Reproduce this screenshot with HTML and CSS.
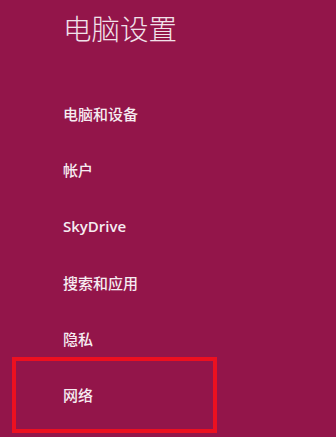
FILE: index.html
```html
<!DOCTYPE html>
<html lang="zh-CN">
<head>
    <meta charset="utf-8">
    <title>电脑设置</title>
    <link rel="stylesheet" href="styles.css">
</head>
<body>
    <main class="settings-pane">
        <h1 class="settings-title">电脑设置</h1>

        <ul class="settings-menu">
            <li class="menu-item">电脑和设备</li>
            <li class="menu-item">帐户</li>
            <li class="menu-item menu-item-latin">SkyDrive</li>
            <li class="menu-item">搜索和应用</li>
            <li class="menu-item">隐私</li>
            <li class="menu-item menu-item-marked">网络</li>
        </ul>
    </main>
</body>
</html>
```

FILE: styles.css
```css
/* Settings pane */
html, body {
    margin: 0;
    height: 100%;
}

body {
    background: #93154a;
    color: #f6ecf1;
    font-family: "Open Sans", "Noto Sans CJK SC", sans-serif;
    overflow: hidden;
}

.settings-pane {
    padding-top: 13px;
}

.settings-title {
    margin: 0;
    padding-left: 63px;
    font-family: "Noto Sans CJK SC", sans-serif;
    font-size: 28.5px;
    font-weight: 300;
    line-height: 30px;
    color: #f1e2ea;
}

.settings-menu {
    list-style: none;
    margin: 42px 0 0;
    padding: 0 0 0 63px;
}

.menu-item {
    display: flex;
    align-items: center;
    height: 56.4px;
    font-size: 15px;
    font-weight: 500;
}

/* Open Sans has no medium cut, so the latin entry uses semibold */
.menu-item-latin {
    font-weight: 600;
}

/* red annotation frame round the network entry */
.menu-item-marked {
    box-sizing: border-box;
    width: 205px;
    height: 76px;
    margin: -10px 0 0 -51px;
    padding-left: 47px;
    border: 4px solid #ec1020;
}
```
